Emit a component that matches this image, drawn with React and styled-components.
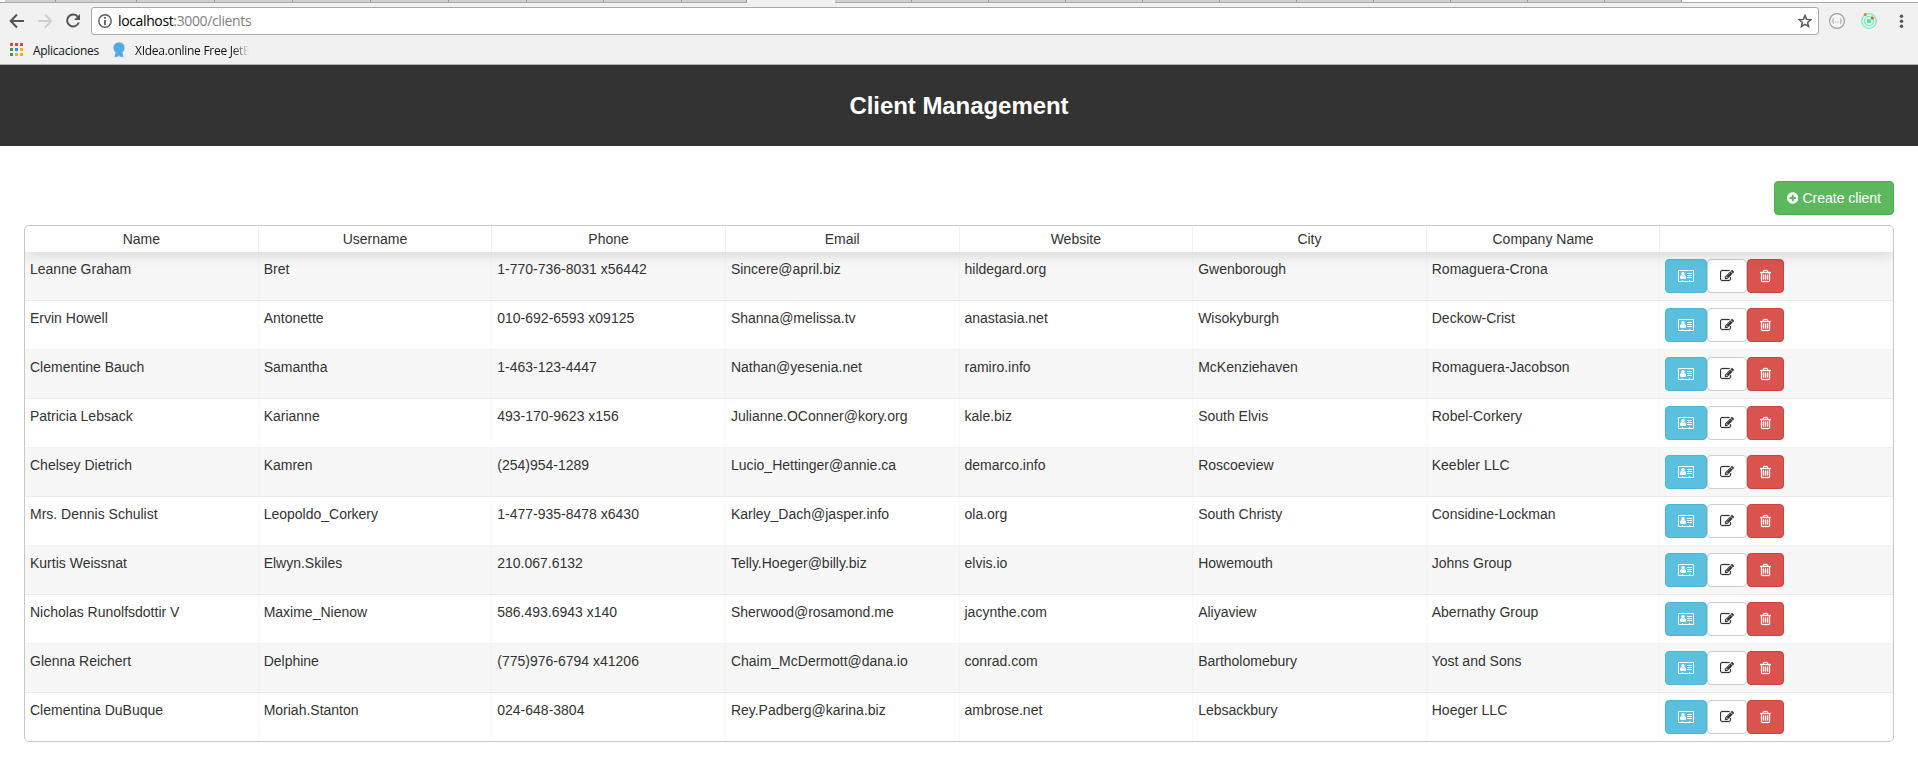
import React from "react";
import styled, { createGlobalStyle } from "styled-components";

const GlobalStyle = createGlobalStyle`
  * { box-sizing: border-box; }
  body {
    margin: 0;
    background: #fff;
    color: #333;
    font: 14px/20px "Liberation Sans", Arial, sans-serif;
  }
`;

const TabStrip = styled.div`
  display: flex;
  height: 3px;
  border-bottom: 1px solid #ababab;
  background: #fff;
  padding-left: 5px;
`;
const Tab = styled.div`
  flex: none;
  width: ${(p) => p.$width}px;
  height: ${(p) => (p.$active ? 3 : 2)}px;
  background: ${(p) => (p.$active ? "#f1f1f1" : "#d0d0d0")};
  border-right: ${(p) => (p.$active ? 0 : 1)}px solid #999;
`;

const Toolbar = styled.div`
  display: flex;
  align-items: center;
  height: 36px;
  padding: 0 9px 0 9px;
  background: #f1f1f1;
`;
const NavButtons = styled.div`
  display: flex;
  align-items: center;
  gap: 12px;
  width: 82px;
`;
const AddressBar = styled.div`
  flex: 1;
  display: flex;
  align-items: center;
  height: 28px;
  padding: 0 6px;
  border: 1px solid #a8a8a8;
  border-radius: 3px;
  background: #fff;
`;
const Url = styled.span`
  flex: 1;
  margin-left: 6px;
  font: 14px/20px "Open Sans", "Noto Sans", sans-serif;
  letter-spacing: -0.37px;
  color: #808080;
  b { font-weight: 400; color: #000; }
`;
const Extensions = styled.div`
  display: flex;
  align-items: center;
  flex: none;
  width: 90px;
  padding-left: 10px;
  gap: 16px;
  svg { flex: none; }
`;

const Bookmarks = styled.div`
  display: flex;
  align-items: center;
  height: 26px;
  padding: 0 0 4px 10px;
  border-bottom: 1px solid #b4b4b4;
  background: #f1f1f1;
`;
const AppsGrid = styled.div`
  display: grid;
  grid-template-columns: repeat(3, 3px);
  gap: 2px;
`;
const AppDot = styled.i`
  width: 3px;
  height: 3px;
  background: ${(p) => p.$color};
`;
const Bookmark = styled.span`
  margin: 1px 0 0 ${(p) => p.$gap}px;
  width: ${(p) => p.$width}px;
  white-space: nowrap;
  font: 12px/17px "Open Sans", "Noto Sans", sans-serif;
  letter-spacing: ${(p) => p.$spacing}px;
  color: #111;
  mask-image: ${(p) => (p.$fade ? "linear-gradient(90deg, #000 98px, transparent 114px)" : "none")};
`;

const Header = styled.header`
  display: flex;
  align-items: center;
  justify-content: center;
  height: 81px;
  background: #333;
  color: #fff;
`;
const Title = styled.h1`
  margin: 0;
  font-size: 24px;
  line-height: 27px;
  font-weight: 700;
  letter-spacing: -0.06px;
`;

const Main = styled.main`
  display: flex;
  flex-direction: column;
  gap: 10px;
  padding: 35px 24px 0;
`;
const Button = styled.button`
  display: flex;
  align-items: center;
  justify-content: center;
  gap: 4px;
  height: 34px;
  padding: 0 12px;
  border: 1px solid ${(p) => p.$border};
  border-radius: 4px;
  background: ${(p) => p.$bg};
  color: ${(p) => p.$color || "#fff"};
  font: inherit;
  white-space: nowrap;
`;
const CreateButton = styled(Button)`
  align-self: flex-end;
  width: 120px;
`;

const Table = styled.div`
  border: 1px solid #c7c7c7;
  border-radius: 5px;
  overflow: hidden;
`;
const HeadRow = styled.div`
  position: relative;
  display: flex;
  height: 26px;
  box-shadow: 0 2px 15px 0 rgba(0, 0, 0, 0.15);
`;
const HeadCell = styled.div`
  flex: 1 0 0;
  min-width: 0;
  padding: 5px;
  line-height: 16px;
  text-align: center;
  border-right: 1px solid rgba(0, 0, 0, 0.05);
  &:last-child { border-right: 0; }
`;
const Row = styled.div`
  display: flex;
  background: ${(p) => (p.$odd ? "#f7f7f7" : "transparent")};
  border-bottom: 1px solid rgba(0, 0, 0, 0.05);
  &:last-child { border-bottom: 0; }
`;
const Cell = styled.div`
  flex: 1 0 0;
  min-width: 0;
  height: 48px;
  padding: 7px 5px;
  white-space: nowrap;
  border-right: 1px solid rgba(0, 0, 0, 0.02);
  &:last-child { border-right: 0; }
`;
const Actions = styled.div`
  display: flex;
`;

const Glyph = ({ path, x = 0, w = 1792, size = 14, weight = 0 }) => (
  <svg
    width={(w / 1792) * size}
    height={size}
    viewBox={`${x} 0 ${w} 1792`}
    fill="currentColor"
    stroke="currentColor"
    strokeWidth={weight}
  >
    <path d={path} />
  </svg>
);

const PLUS =
  "M1344 960v-128q0-26-19-45t-45-19h-256v-256q0-26-19-45t-45-19h-128q-26 0-45 19t-19 45v256h-256q-26 0-45 19t-19 45v128q0 26 19 45t45 19h256v256q0 26 19 45t45 19h128q26 0 45-19t19-45v-256h256q26 0 45-19t19-45zm320-64q0 209-103 385.5t-279.5 279.5-385.5 103-385.5-103-279.5-279.5-103-385.5 103-385.5 279.5-279.5 385.5-103 385.5 103 279.5 279.5 103 385.5z";
const EDIT =
  "M888 1184l116-116-152-152-116 116v56h96v96h56zm440-720q-16-16-33 1l-350 350q-17 17-1 33t33-1l350-350q17-17 1-33zm80 594v190q0 119-84.5 203.5t-203.5 84.5h-832q-119 0-203.5-84.5t-84.5-203.5v-832q0-119 84.5-203.5t203.5-84.5h832q63 0 117 25 15 7 18 23 3 17-9 29l-49 49q-14 14-32 8-23-6-45-6h-832q-66 0-113 47t-47 113v832q0 66 47 113t113 47h832q66 0 113-47t47-113v-126q0-13 9-22l64-64q15-15 35-7t20 29zm-96-738l288 288-672 672h-288v-288zm444 132l-92 92-288-288 92-92q28-28 68-28t68 28l152 152q28 28 28 68t-28 68z";
const TRASH =
  "M704 736v576q0 14-9 23t-23 9h-64q-14 0-23-9t-9-23v-576q0-14 9-23t23-9h64q14 0 23 9t9 23zm256 0v576q0 14-9 23t-23 9h-64q-14 0-23-9t-9-23v-576q0-14 9-23t23-9h64q14 0 23 9t9 23zm256 0v576q0 14-9 23t-23 9h-64q-14 0-23-9t-9-23v-576q0-14 9-23t23-9h64q14 0 23 9t9 23zm128 724v-948h-896v948q0 22 7 40.5t14.5 27 10.5 8.5h832q3 0 10.5-8.5t14.5-27 7-40.5zm-672-1076h448l-48-117q-7-9-17-11h-317q-10 2-17 11zm928 32v64q0 14-9 23t-23 9h-96v948q0 83-47 143.5t-113 60.5h-832q-66 0-113-58.5t-47-141.5v-952h-96q-14 0-23-9t-9-23v-64q0-14 9-23t23-9h309l70-167q15-37 54-63t79-26h320q40 0 79 26t54 63l70 167h309q14 0 23 9t9 23z";

const CardIcon = () => (
  <svg width="16" height="14" viewBox="0 0 16 14" fill="currentColor">
    <path
      fillRule="evenodd"
      d="M1 1h14a1 1 0 0 1 1 1v10a1 1 0 0 1-1 1H1a1 1 0 0 1-1-1V2a1 1 0 0 1 1-1zM1 2v10h2.900v-.8h1.200v.8h5.800v-.8h1.200v.8H15V2z"
    />
    <circle cx="5" cy="4.8" r="1.8" />
    <path d="M2 8.600C2 7 2.700 6 3.500 6c1 .8 2 .8 3 0C7.300 6 8 7 8 8.600C8 9.500 7.600 10 7 10H3C2.400 10 2 9.500 2 8.600zM9 4h5v1H9zM9 6h5v1H9zM9 8h5v1H9z" />
  </svg>
);

const COLUMNS = ["Name", "Username", "Phone", "Email", "Website", "City", "Company Name", ""];
const CLIENTS = [
  ["Leanne Graham", "Bret", "1-770-736-8031 x56442", "Sincere@april.biz", "hildegard.org", "Gwenborough", "Romaguera-Crona"],
  ["Ervin Howell", "Antonette", "010-692-6593 x09125", "Shanna@melissa.tv", "anastasia.net", "Wisokyburgh", "Deckow-Crist"],
  ["Clementine Bauch", "Samantha", "1-463-123-4447", "Nathan@yesenia.net", "ramiro.info", "McKenziehaven", "Romaguera-Jacobson"],
  ["Patricia Lebsack", "Karianne", "493-170-9623 x156", "Julianne.OConner@kory.org", "kale.biz", "South Elvis", "Robel-Corkery"],
  ["Chelsey Dietrich", "Kamren", "(254)954-1289", "Lucio_Hettinger@annie.ca", "demarco.info", "Roscoeview", "Keebler LLC"],
  ["Mrs. Dennis Schulist", "Leopoldo_Corkery", "1-477-935-8478 x6430", "Karley_Dach@jasper.info", "ola.org", "South Christy", "Considine-Lockman"],
  ["Kurtis Weissnat", "Elwyn.Skiles", "210.067.6132", "Telly.Hoeger@billy.biz", "elvis.io", "Howemouth", "Johns Group"],
  ["Nicholas Runolfsdottir V", "Maxime_Nienow", "586.493.6943 x140", "Sherwood@rosamond.me", "jacynthe.com", "Aliyaview", "Abernathy Group"],
  ["Glenna Reichert", "Delphine", "(775)976-6794 x41206", "Chaim_McDermott@dana.io", "conrad.com", "Bartholomebury", "Yost and Sons"],
  ["Clementina DuBuque", "Moriah.Stanton", "024-648-3804", "Rey.Padberg@karina.biz", "ambrose.net", "Lebsackbury", "Hoeger LLC"],
];
const TABS = [51, 81, 78, 78, 78, 78, 78, 77, 78, 65, "active", 77, 77, 77, 77, 77, 77, 77, 77, 77, 77, 77];
const APP_COLORS = ["#ea4335", "#ea4335", "#ea4335", "#34a050", "#2d8cf0", "#f4b400", "#34a050", "#f4b400", "#f4b400"];

function Browser() {
  return (
    <>
      <TabStrip>
        {TABS.map((w, i) => (
          <Tab key={i} $active={w === "active"} $width={w === "active" ? 88 : w} />
        ))}
      </TabStrip>
      <Toolbar>
        <NavButtons>
          <svg width="16" height="16" viewBox="0 0 16 16" fill="none" stroke="#555" strokeWidth="2">
            <path d="M15 8H2M8 1.500L1.700 8L8 14.500" />
          </svg>
          <svg width="16" height="16" viewBox="0 0 16 16" fill="none" stroke="#d0d0d0" strokeWidth="2">
            <path d="M1 8h13M8 1.500L14.300 8L8 14.500" />
          </svg>
          <svg width="16" height="16" viewBox="0 0 16 16" fill="none" stroke="#555" strokeWidth="2">
            <path d="M13 4A6 6 0 1 0 13.800 9.500" />
            <path d="M15 1v6H9z" fill="#555" stroke="none" />
          </svg>
        </NavButtons>
        <AddressBar>
          <svg width="14" height="14" viewBox="0 0 14 14" fill="none" stroke="#5a5a5a">
            <circle cx="7" cy="7" r="6.200" strokeWidth="1.400" />
            <path d="M7 6v5M7 3v1.800" strokeWidth="1.800" />
          </svg>
          <Url><b>localhost</b>:3000/clients</Url>
          <svg width="14" height="14" viewBox="0 0 14 14" fill="none" stroke="#5a5a5a" strokeWidth="1.500">
            <path d="M7 1.500l1.600 3.900 4.200.3-3.200 2.700 1 4.100L7 10.300l-3.600 2.200 1-4.100L1.200 5.700l4.200-.3z" />
          </svg>
        </AddressBar>
        <Extensions>
          <svg width="16" height="16" viewBox="0 0 16 16" fill="none" stroke="#a0a0a0">
            <circle cx="8" cy="8" r="7.400" fill="#f6f6f6" strokeWidth="1.200" />
            <path d="M5 5.500c-1 0-.8.700-.8 1.500S4 8 3.400 8c.6 0 .8.200.8 1s-.2 1.500.8 1.500M11 5.500c1 0 .8.700.8 1.500s.2 1 .8 1c-.6 0-.8.200-.8 1s.2 1.500-.8 1.500M6.200 9h.8M7.800 9h.8M9.300 9h.7" />
          </svg>
          <svg width="16" height="16" viewBox="0 0 16 16" fill="none" stroke="#71f0bd">
            <circle cx="8" cy="8" r="7.300" strokeWidth="1.300" />
            <circle cx="8" cy="8" r="4.600" strokeWidth="1.300" />
            <circle cx="8" cy="8" r="2.300" fill="#4ee8a0" stroke="none" />
            <circle cx="4.300" cy="1.600" r="1.600" fill="#ff7a30" stroke="none" />
            <circle cx="11.300" cy="5" r="1.600" fill="#f2502e" stroke="none" />
          </svg>
          <svg width="16" height="16" viewBox="0 0 16 16" fill="#555">
            <circle cx="8.500" cy="3.200" r="1.700" />
            <circle cx="8.500" cy="8.200" r="1.700" />
            <circle cx="8.500" cy="13.200" r="1.700" />
          </svg>
        </Extensions>
      </Toolbar>
      <Bookmarks>
        <AppsGrid>
          {APP_COLORS.map((c, i) => <AppDot key={i} $color={c} />)}
        </AppsGrid>
        <Bookmark $gap={10} $width={80} $spacing={-0.28}>Aplicaciones</Bookmark>
        <svg width="12" height="16" viewBox="0 0 12 16" fill="#55a9e4">
          <circle cx="6" cy="5.800" r="5.600" />
          <path d="M2.500 10.500h7l1 5-2.500-1-1 .500-1-2-1 2-1-.500-2.500 1z" />
        </svg>
        <Bookmark $gap={10} $width={124} $spacing={-0.28} $fade>XIdea.online Free JetB</Bookmark>
      </Bookmarks>
    </>
  );
}

export default function App() {
  return (
    <>
      <GlobalStyle />
      <Browser />
      <Header>
        <Title>Client Management</Title>
      </Header>
      <Main>
        <CreateButton $bg="#5cb85c" $border="#4cae4c">
          <Glyph path={PLUS} x={128} w={1536} />
          Create client
        </CreateButton>
        <Table>
          <HeadRow>
            {COLUMNS.map((name) => <HeadCell key={name}>{name}</HeadCell>)}
          </HeadRow>
          {CLIENTS.map((client, i) => (
            <Row key={client[0]} $odd={i % 2 === 0}>
              {client.map((value) => <Cell key={value}>{value}</Cell>)}
              <Cell>
                <Actions>
                  <Button $bg="#5bc0de" $border="#46b8da"><CardIcon /></Button>
                  <Button $bg="#fff" $border="#ccc" $color="#333"><Glyph path={EDIT} weight={30} /></Button>
                  <Button $bg="#d9534f" $border="#d43f3a"><Glyph path={TRASH} x={192} w={1408} weight={40} /></Button>
                </Actions>
              </Cell>
            </Row>
          ))}
        </Table>
      </Main>
    </>
  );
}
